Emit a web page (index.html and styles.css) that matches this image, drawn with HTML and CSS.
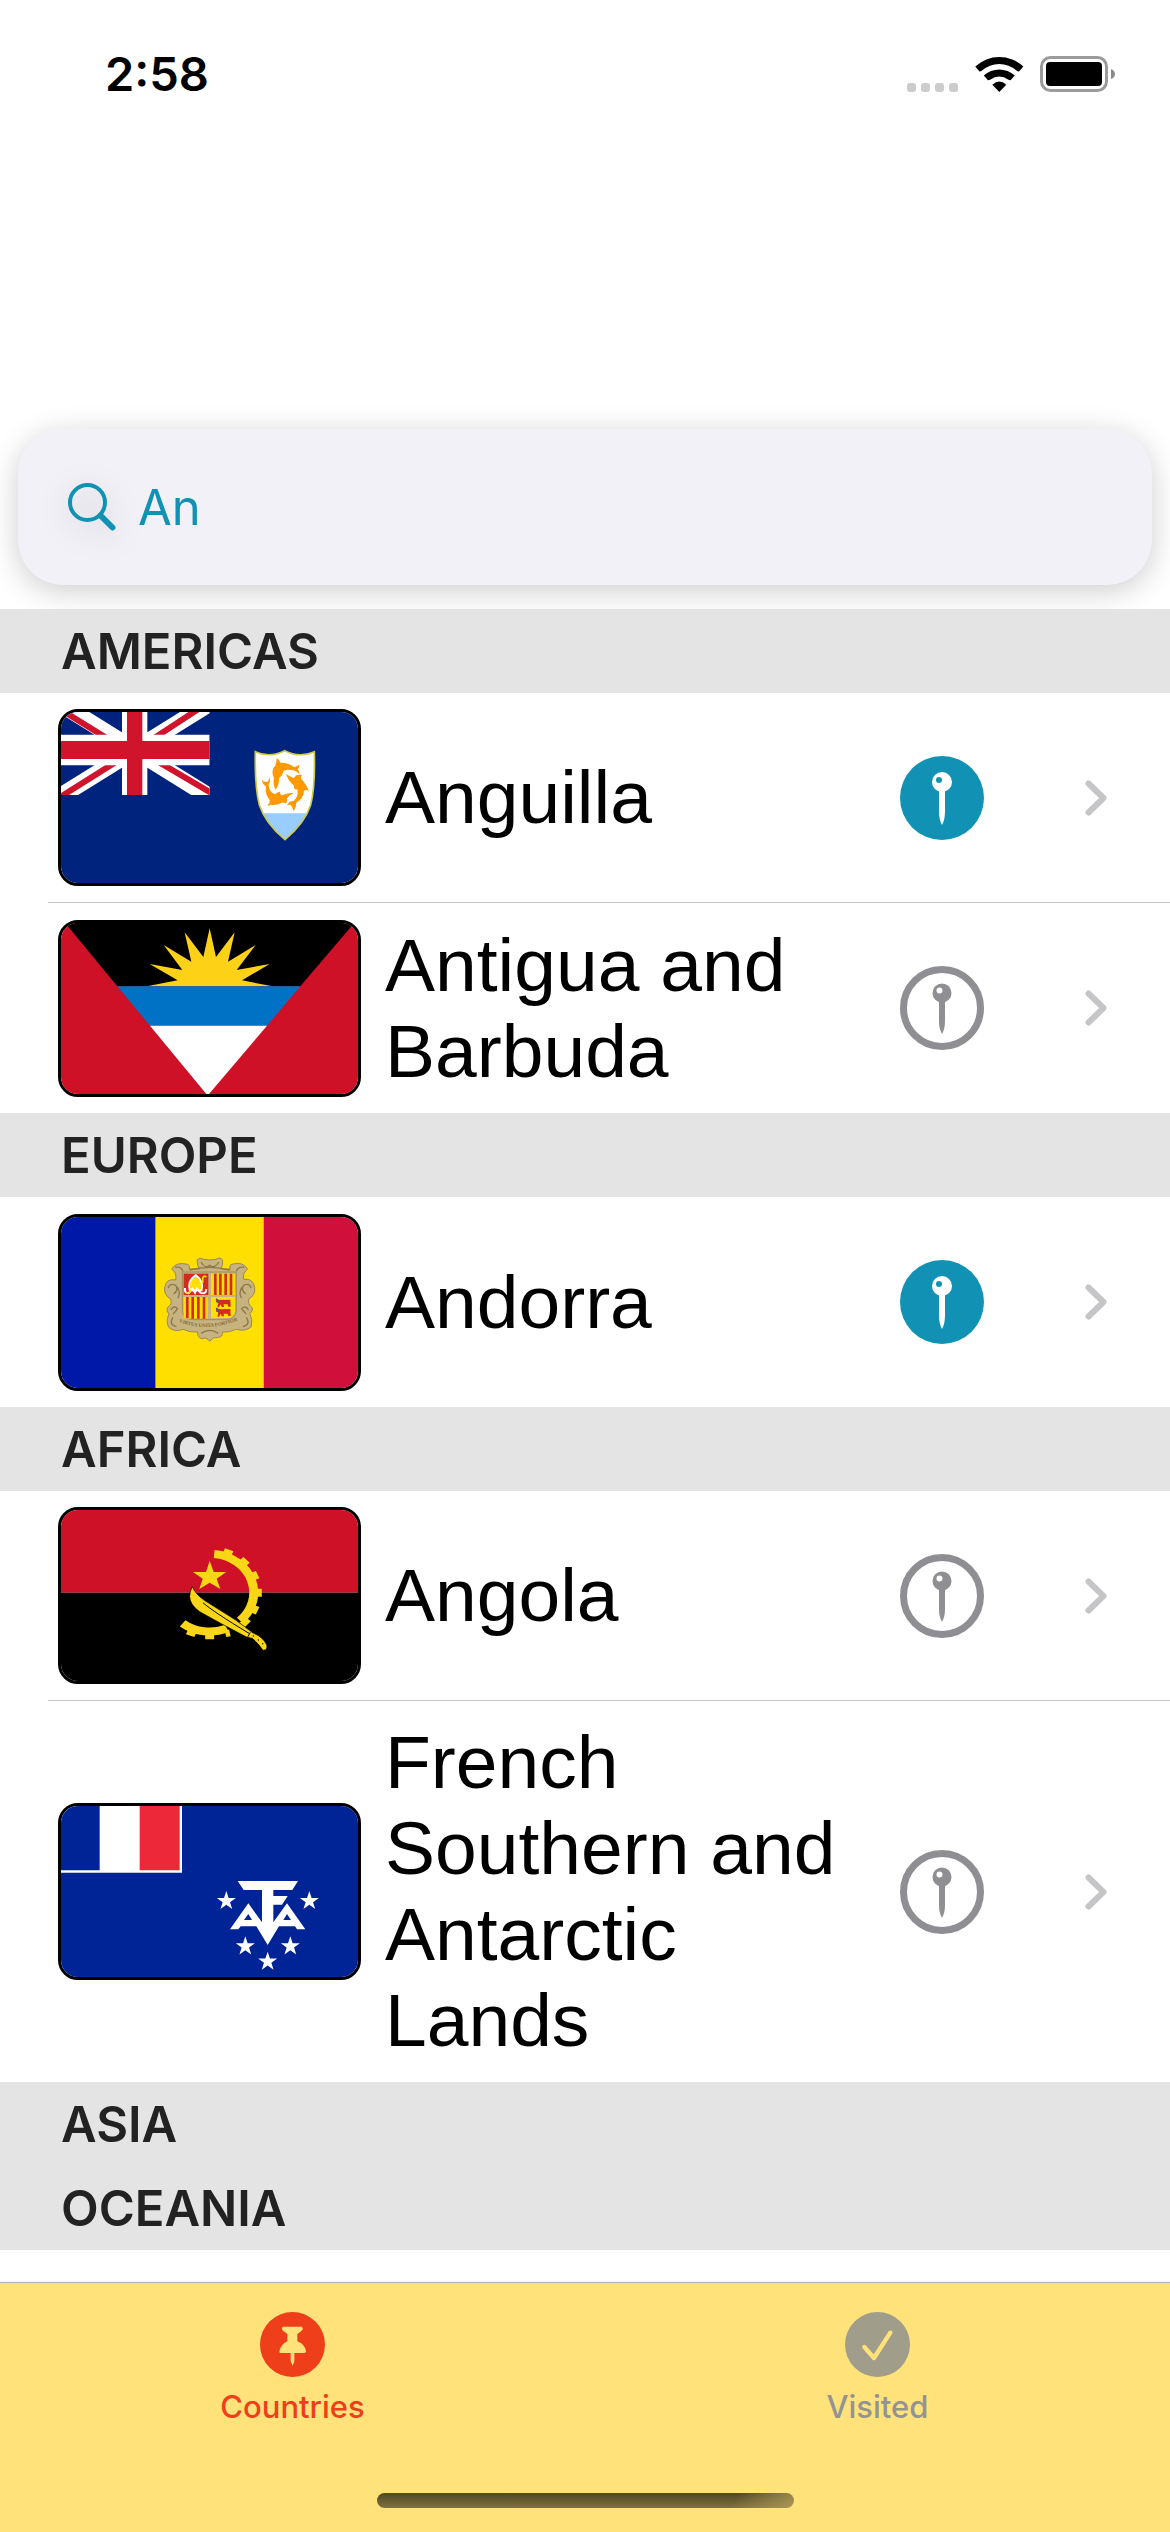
FILE: index.html
```html
<!DOCTYPE html>
<html lang="en">
<head>
<meta charset="utf-8">
<meta name="viewport" content="width=device-width, initial-scale=1">
<title>Countries</title>
<link rel="stylesheet" href="styles.css">
</head>
<body>
<svg class="defs" aria-hidden="true">
  <symbol id="pin-on" viewBox="0 0 84 84">
    <circle cx="42" cy="42" r="42" fill="#1192b5"/>
    <path d="M39 34h6v21q0 9-3 14q-3-5-3-14z" fill="#fff"/>
    <circle cx="42" cy="26" r="10" fill="#fff"/>
    <circle cx="39" cy="24" r="3" fill="#1192b5"/>
  </symbol>
  <symbol id="pin-off" viewBox="0 0 84 84">
    <circle cx="42" cy="42" r="38.500" fill="none" stroke="#8e8e93" stroke-width="7"/>
    <path d="M39 34h6v21q0 8-3 13q-3-5-3-13z" fill="#8e8e93"/>
    <circle cx="42" cy="27" r="9.500" fill="#8e8e93"/>
    <circle cx="39.500" cy="24.500" r="3" fill="#fff"/>
  </symbol>
  <symbol id="chevron" viewBox="0 0 22 36">
    <path d="M3.500 3.500L18.500 18L3.500 32.500" fill="none" stroke="#c5c5c7" stroke-width="6" stroke-linecap="round" stroke-linejoin="round"/>
  </symbol>
  <symbol id="star" viewBox="-10 -10 20 20" overflow="visible">
    <path d="M0-10L2.300-3.100H9.500L3.700 1.200L5.900 8.100L0 3.800L-5.900 8.100L-3.700 1.200L-9.500-3.100H-2.300Z"/>
  </symbol>
</svg>

<div class="status">
  <time class="clock">2:58</time>
  <div class="status-icons">
    <svg class="signal" viewBox="0 0 52 9"><g fill="#ccc"><rect width="9" height="9" rx="3"/><rect x="14" width="9" height="9" rx="3"/><rect x="28" width="9" height="9" rx="3"/><rect x="42" width="9" height="9" rx="3"/></g></svg>
    <svg class="wifi" viewBox="0 0 49 36">
      <path d="M.3 10.500A35 35 0 0 1 48.300 10.500L44 15.500Q42.500 15.500 41.500 14.500A26 26 0 0 0 7 14.500Q6 15.500 4.500 15.500Z"/>
      <path d="M8.800 19.500A23 23 0 0 1 39.800 19.500L35.500 24.300Q34 24.300 33 23.500A14 14 0 0 0 15.600 23.500Q14.500 24.300 13 24.300Z"/>
      <path d="M17.300 28.700Q24.300 22.500 31.300 28.700L24.300 36Z"/>
    </svg>
    <svg class="battery" viewBox="0 0 75 36">
      <rect x="1.500" y="1.500" width="65" height="33" rx="9" fill="none" stroke="#9b9b9b" stroke-width="3"/>
      <rect x="6" y="6" width="56" height="24" rx="4"/>
      <path d="M71 13q4 1.500 4 5t-4 5z" fill="#8b8b8b"/>
    </svg>
  </div>
</div>

<main class="main">
  <label class="search">
    <svg class="search-icon" viewBox="0 0 48 48" role="img" aria-label="Search"><circle cx="19.500" cy="19.500" r="17.500"/><path class="handle" d="M32.500 32.500L44.500 44.500"/></svg>
    <input class="search-input" type="text" value="An" aria-label="Search countries">
  </label>

  <section>
    <h2 class="region">AMERICAS</h2>
    <ul class="rows">
      <li class="row">
        <svg class="flag" viewBox="64 66 891 513" aria-hidden="true">
          <rect x="60" y="60" width="900" height="530" fill="#00247d"/>
          <svg x="60" y="40" width="450" height="275" viewBox="60 40 450 275">
            <path d="M60 40L510 320M510 40L60 320" stroke="#fff" stroke-width="50"/>
            <path d="M60 57L207 148M338 148L490 48M60 322L235 212M350 212L525 315" stroke="#cf142b" stroke-width="18"/>
            <path d="M285 40V320" stroke="#fff" stroke-width="76"/>
            <path d="M60 180H510" stroke="#fff" stroke-width="91"/>
            <path d="M285 40V320" stroke="#cf142b" stroke-width="46"/>
            <path d="M60 180H510" stroke="#cf142b" stroke-width="54"/>
          </svg>
          <path d="M647 185Q690 205 735 182Q780 205 824 185Q827 290 813 345Q795 400 736 449Q677 400 659 345Q645 290 647 185Z" fill="#fff"/>
          <path d="M668 370H804Q785 408 736 446Q687 408 668 370Z" fill="#9cf"/>
          <path d="M647 185Q690 205 735 182Q780 205 824 185Q827 290 813 345Q795 400 736 449Q677 400 659 345Q645 290 647 185Z" fill="none" stroke="#cbca4a" stroke-width="5"/>
          <g fill="#f90">
            <path d="M708 300Q699 285 703 265Q695 250 701 235Q711 225 711 204Q718 208 722 218Q750 218 764 232L780 224Q778 234 774 238Q780 245 779 253Q770 242 758 241Q738 236 731 244Q729 258 719 263Q718 285 708 300Z"/>
            <path d="M739 251Q748 259 762 264Q773 250 787 255Q780 262 788 270Q800 284 808 302Q796 298 793 303Q792 325 770 338Q770 352 762 364Q758 350 754 346Q748 343 742 346Q748 332 762 333Q778 318 773 298Q761 300 763 287Q745 272 739 251Z"/>
            <path d="M690 261Q693 275 687 284Q687 304 706 313Q712 305 721 305Q720 314 726 316Q745 308 762 308Q748 317 742 325Q744 335 739 341Q730 335 725 339Q708 348 693 344Q686 350 684 345Q692 338 690 330Q675 312 679 290Q668 282 666 270Q676 277 682 276Q690 270 690 261Z"/>
          </g>
        </svg>
        <span class="name">Anguilla</span>
        <button class="pin" type="button" aria-label="Unpin Anguilla"><svg viewBox="0 0 84 84"><use href="#pin-on"/></svg></button>
        <svg class="chevron"><use href="#chevron"/></svg>
      </li>
      <li class="row">
        <svg class="flag" viewBox="64 66 891 513" aria-hidden="true">
          <rect x="60" y="60" width="900" height="530" fill="#ce1126"/>
          <path d="M64 50L84 75L233 256H782L936 75L955 50Z"/>
          <path d="M322 256L414 238L330 189L428 207L372 132L455 182L435 94L491 168L510 82L529 168L585 94L565 182L648 132L591 207L690 189L607 238L699 256Z" fill="#fcd116"/>
          <path d="M233 256H782L682 374H331Z" fill="#0072c6"/>
          <path d="M331 374H682L508 579H500Z" fill="#fff"/>
        </svg>
        <span class="name">Antigua and Barbuda</span>
        <button class="pin" type="button" aria-label="Pin Antigua and Barbuda"><svg viewBox="0 0 84 84"><use href="#pin-off"/></svg></button>
        <svg class="chevron"><use href="#chevron"/></svg>
      </li>
    </ul>
  </section>

  <section>
    <h2 class="region">EUROPE</h2>
    <ul class="rows">
      <li class="row">
        <svg class="flag" viewBox="64 49 891 513" aria-hidden="true">
          <rect x="60" y="40" width="288" height="530" fill="#0018a8"/>
          <rect x="348" y="40" width="324" height="530" fill="#fedf00"/>
          <rect x="672" y="40" width="290" height="530" fill="#d0103a"/>
          <path d="M472 178Q480 168 492 176Q510 180 528 176Q542 168 549 178Q550 196 543 205H572Q566 192 580 190Q610 182 624 206Q608 214 612 236Q640 232 645 260Q648 284 628 294Q622 308 638 322Q640 334 630 338Q640 356 635 378Q616 394 590 386Q570 396 548 394Q550 410 534 410Q520 408 510 422Q500 408 488 414Q472 412 474 394Q450 396 430 386Q406 396 387 380Q378 360 388 340Q378 332 384 320Q400 310 392 294Q372 284 375 260Q380 232 408 238Q412 214 396 206Q408 184 438 190Q454 192 448 205H480Q472 196 472 178Z" fill="#c7b37f" stroke="#9b8756" stroke-width="3"/>
          <path d="M428 214H590V330Q588 355 560 357H460Q430 355 428 330Z" fill="#c7b37f" stroke="#a08d5c" stroke-width="3"/>
          <path d="M406 200Q425 196 430 212M614 200Q595 196 590 212M386 262Q390 246 408 254Q418 268 402 280M634 262Q630 246 612 254Q602 268 618 280M394 328Q402 312 414 324Q406 336 400 340M626 328Q618 312 606 324Q614 336 620 340M484 184Q496 206 510 194Q524 206 538 184M450 208Q510 192 570 208M400 350Q386 372 410 378M620 350Q634 372 610 378M484 398Q510 380 536 398M414 292Q424 280 414 260M606 292Q596 280 606 260" fill="none" stroke="#8d7947" stroke-width="4"/>
          <rect x="432" y="219" width="74" height="64" fill="#d52b1e"/>
          <path d="M450 269Q442 242 468 223Q494 242 486 269Z" fill="#fedf00" stroke="#fff" stroke-width="5"/>
          <path d="M436 262Q434 278 447 278L458 264L466 276L472 264L482 276M481 276Q500 282 500 266" fill="none" stroke="#fff" stroke-width="6"/>
          <path d="M489 246V232Q494 222 500 230M438 276Q448 280 454 268" fill="none" stroke="#fedf00" stroke-width="5"/>
          <rect x="514" y="219" width="72" height="64" fill="#fedf00"/>
          <path d="M527 219V283M542 219V283M558 219V283M574 219V283" stroke="#d52b1e" stroke-width="8"/>
          <rect x="432" y="289" width="72" height="64" fill="#fedf00"/>
          <path d="M443 289V352M459 289V354M476 289V354M493 289V354" stroke="#d52b1e" stroke-width="8"/>
          <path d="M514 289H586V330Q585 352 562 352H514Z" fill="#fedf00"/>
          <path id="cow" d="M530 294L540 298L572 297L573 318H566L564 311H552L553 319H546L543 311L538 320H533L536 308L529 303Z" fill="#d52b1e"/>
          <use href="#cow" y="28"/>
          <path d="M529 294L536 300L530 304M529 322L536 328L530 332" fill="none" stroke="#4b5c93" stroke-width="4"/>
          <path id="motto" d="M418 364Q510 400 616 350" fill="none"/>
          <text class="motto"><textPath href="#motto">VIRTUS UNITA FORTIOR</textPath></text>
        </svg>
        <span class="name">Andorra</span>
        <button class="pin" type="button" aria-label="Unpin Andorra"><svg viewBox="0 0 84 84"><use href="#pin-on"/></svg></button>
        <svg class="chevron"><use href="#chevron"/></svg>
      </li>
    </ul>
  </section>

  <section>
    <h2 class="region">AFRICA</h2>
    <ul class="rows">
      <li class="row">
        <svg class="flag" viewBox="64 61 891 513" aria-hidden="true">
          <rect x="60" y="50" width="900" height="259" fill="#ce1126"/>
          <rect x="60" y="309" width="900" height="280"/>
          <g transform="translate(510 309) scale(1.125 1)" fill="none" stroke="#f9d616">
            <path d="M12-116A116 116 0 0 1 81 84M46 107A116 116 0 0 1-72 92" stroke-width="24"/>
            <path d="M0 120V140" stroke-width="24"/>
            <path id="tooth" d="M120 0H139" stroke-width="24"/>
            <use href="#tooth" transform="rotate(23)"/><use href="#tooth" transform="rotate(43)"/>
            <use href="#tooth" transform="rotate(-23)"/><use href="#tooth" transform="rotate(-45)"/><use href="#tooth" transform="rotate(-68)"/>
            <use href="#tooth" transform="rotate(112)"/>
            <path d="M46 112L50 132" stroke-width="12"/>
          </g>
          <path d="M510 213L522 247H560L531 267L542 298L510 279L479 298L489 267L460 247H499Z" fill="#f9d616"/>
          <path d="M458 291Q466 312 494 332L588 391L640 430Q668 440 681 465Q685 482 670 482Q655 460 638 446L622 443L545 402L480 366Q450 345 450 320Q450 304 458 291Z" fill="#f9d616" stroke="#000" stroke-width="2"/>
          <path d="M490 339Q520 366 628 431M632 428L623 444" fill="none" stroke="#000" stroke-width="3"/>
          <circle cx="641" cy="439" r="2"/><circle cx="656" cy="451" r="2"/><circle cx="669" cy="462" r="2"/>
        </svg>
        <span class="name">Angola</span>
        <button class="pin" type="button" aria-label="Pin Angola"><svg viewBox="0 0 84 84"><use href="#pin-off"/></svg></button>
        <svg class="chevron"><use href="#chevron"/></svg>
      </li>
      <li class="row">
        <svg class="flag" viewBox="64 49 891 513" aria-hidden="true">
          <rect x="60" y="40" width="900" height="530" fill="#002395"/>
          <path d="M60 40H427V249H60Z" fill="#fff"/>
          <path d="M60 40H180V242H60Z" fill="#002395"/>
          <path d="M300 40H420V242H300Z" fill="#ed2939"/>
          <g fill="#fff">
            <path d="M594 274H775L758 301H701V319H744L727 345H701V398L742 341L797 419H772L766 410H718L684 466L650 410H603L596 419H571L626 341L667 398V301H612Z"/>
            <use href="#star" x="530" y="304" width="60" height="60"/>
            <use href="#star" x="779" y="304" width="60" height="60"/>
            <use href="#star" x="587" y="440" width="60" height="60"/>
            <use href="#star" x="722" y="440" width="60" height="60"/>
            <use href="#star" x="654" y="486" width="60" height="60"/>
          </g>
          <path d="M626 373L637 391H613ZM742 373L754 391H731Z" fill="#002395"/>
        </svg>
        <span class="name">French Southern and Antarctic Lands</span>
        <button class="pin" type="button" aria-label="Pin French Southern and Antarctic Lands"><svg viewBox="0 0 84 84"><use href="#pin-off"/></svg></button>
        <svg class="chevron"><use href="#chevron"/></svg>
      </li>
    </ul>
  </section>

  <section><h2 class="region">ASIA</h2></section>
  <section><h2 class="region">OCEANIA</h2></section>
</main>

<footer class="tabbar">
  <nav class="tabs">
    <a class="tab tab-active" href="#countries">
      <svg class="tab-icon" viewBox="0 0 195 195"><circle cx="97.500" cy="97.500" r="97.500" fill="#ee3e1a"/><path d="M68 44H126Q131 50 125 56L112 66V88Q136 98 138 118Q138 123 134 123H103V148L98 161L92 148V123H62Q57 123 58 118Q62 98 82 88V66L69 56Q63 50 68 44Z" fill="#ffe27a"/></svg>
      <span>Countries</span>
    </a>
    <a class="tab" href="#visited">
      <svg class="tab-icon" viewBox="0 0 195 195"><circle cx="97.500" cy="97.500" r="97.500" fill="#a19d8b"/><path d="M58 105L87 138L136 62" fill="none" stroke="#ffe27a" stroke-width="13" stroke-linecap="round" stroke-linejoin="round"/></svg>
      <span>Visited</span>
    </a>
  </nav>
  <div class="home"></div>
</footer>
</body>
</html>
```
FILE: styles.css
```css
* { box-sizing: border-box; }

body {
  margin: 0;
  min-height: 100vh;
  display: flex;
  flex-direction: column;
  background: #fff;
  color: #000;
  font-family: Inter, "Liberation Sans", sans-serif;
}

.defs { position: absolute; width: 0; height: 0; }

.status {
  display: flex;
  justify-content: space-between;
  align-items: center;
  height: 148px;
  padding: 0 55px 0 105px;
}
.clock { font-size: 47px; line-height: 58px; font-weight: 600; }
.status-icons { display: flex; align-items: flex-end; gap: 16px; }
.signal { width: 52px; height: 9px; }
.wifi { width: 49px; height: 36px; }
.battery { width: 75px; height: 36px; }

.main { flex: 1; padding-top: 281px; }

.search {
  display: flex;
  align-items: center;
  gap: 22px;
  height: 156px;
  margin: 0 18px 24px;
  padding: 0 50px;
  border-radius: 45px;
  background: #f2f1f7;
  box-shadow: 0 6px 30px rgba(0, 0, 0, .2);
}
.search-icon {
  flex: none;
  width: 48px;
  height: 48px;
  fill: none;
  stroke: #1192b5;
  stroke-width: 4;
  filter: drop-shadow(0 6px 15px rgba(0, 0, 0, .2));
}
.handle { stroke-width: 6; stroke-linecap: round; }
.search-input {
  flex: 1;
  min-width: 0;
  padding: 2px 0 0;
  border: 0;
  outline: 0;
  background: none;
  color: #1192b5;
  font: 400 49px/60px Inter, sans-serif;
}

.region {
  margin: 0;
  padding: 1px 61px 0;
  background: #e4e4e4;
  color: #222;
  font-size: 49px;
  line-height: 83px;
  font-weight: 600;
}

.rows { margin: 0; padding: 0; list-style: none; }
.row {
  display: flex;
  align-items: center;
  min-height: 210px;
  margin-left: 48px;
  padding: 16px 63px 16px 10px;
  border-bottom: 1px solid #c6c6c8;
}
.row:last-child { border-bottom: 0; }
.flag {
  flex: none;
  width: 303px;
  height: 177px;
  border: 3px solid #000;
  border-radius: 20px;
}
.motto { font: 700 15px "Liberation Serif", serif; fill: #7d6a3c; }
.name {
  flex: 1;
  min-width: 0;
  padding: 2px 56px 3px 24px;
  font: 400 75px/86px "Liberation Sans", Arial, sans-serif;
}
.pin {
  flex: none;
  width: 84px;
  height: 84px;
  margin-right: 101px;
  padding: 0;
  border: 0;
  border-radius: 50%;
  background: none;
}
.pin svg { display: block; width: 84px; height: 84px; }
.chevron { flex: none; width: 22px; height: 36px; }

.tabbar {
  display: flex;
  flex-direction: column;
  justify-content: space-between;
  align-items: center;
  min-height: 250px;
  padding: 29px 0 24px;
  border-top: 1px solid #aeaeae;
  background: #ffe27a;
}
.tabs { display: flex; width: 100%; }
.tab {
  flex: 1;
  display: flex;
  flex-direction: column;
  align-items: center;
  gap: 12px;
  color: #939393;
  font-size: 31px;
  line-height: 36px;
  font-weight: 500;
  text-decoration: none;
}
.tab-active { color: #ee3e1a; }
.tab-icon { width: 65px; height: 65px; }
.home {
  width: 417px;
  height: 15px;
  border-radius: 8px;
  background:
    linear-gradient(115deg, transparent 85%, rgba(190, 168, 98, .7)),
    linear-gradient(#4f4726, #80713c);
}
```
